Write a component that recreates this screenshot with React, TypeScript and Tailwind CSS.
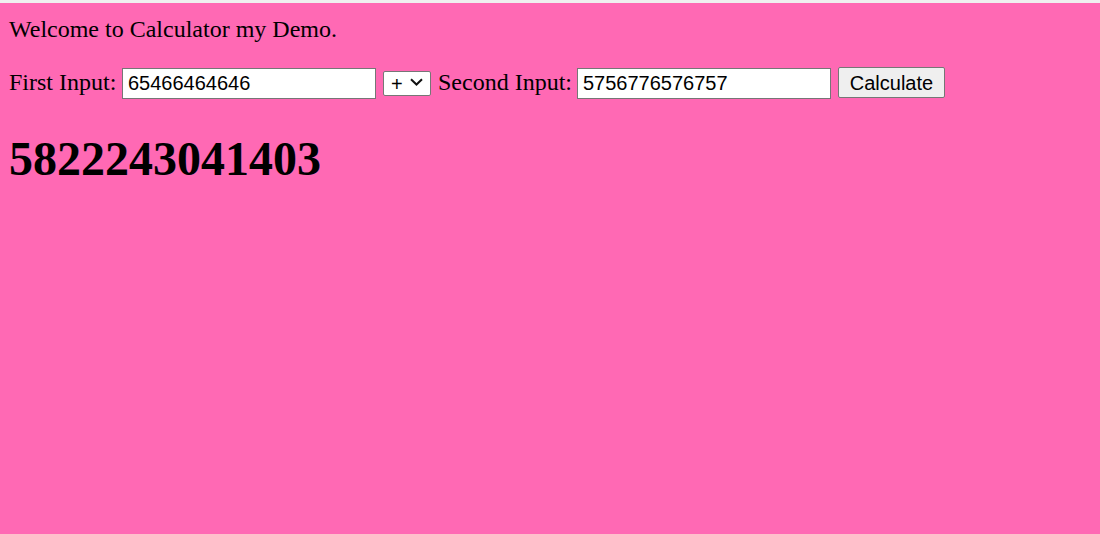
import { useState } from "react";

// simple calculator demo page

const serif = "font-['Liberation_Serif','Times_New_Roman',serif]";
const sans = "font-['Liberation_Sans',Arial,sans-serif]";

export default function App() {
  const [first, setFirst] = useState("65466464646");
  const [second, setSecond] = useState("5756776576757");
  const [op, setOp] = useState("+");
  const [result] = useState("5822243041403");

  return (
    <div className="min-h-screen flex flex-col bg-[#f0f0f0]">
      <div className="h-[3px] shrink-0" />
      <div className={`flex-1 min-h-[531px] bg-[#ff69b4] pl-[9px] text-black ${serif}`}>
        <p className="mt-[13px] text-[24px] leading-[27.6px]">Welcome to Calculator my Demo.</p>

        <div className="mt-[23px] flex items-center h-[31px] text-[24px] leading-[27.6px]">
          <span className="w-[113px] shrink-0 mt-[1px]">First Input:</span>
          <input
            value={first}
            onChange={(e) => setFirst(e.target.value)}
            className={`mt-[2px] h-[31px] w-[254px] border border-[#767676] bg-white px-[5px] text-[20px] text-black outline-none ${sans}`}
          />
          <div className="relative ml-[7px] h-[25px] w-[48px]">
            <select
              value={op}
              onChange={(e) => setOp(e.target.value)}
              className={`h-full w-full appearance-none rounded-[2px] border border-[#767676] bg-white pl-[7px] text-[20px] leading-none text-black ${sans}`}
            >
              <option value="+">+</option>
              <option value="-">-</option>
              <option value="*">*</option>
              <option value="/">/</option>
            </select>
            <svg
              className="pointer-events-none absolute left-[27px] top-[8px]"
              width="13"
              height="8"
              viewBox="0 0 13 8"
              fill="none"
            >
              <path d="M1 1.2 L6.5 6.5 L12 1.2" stroke="#111" strokeWidth="2" />
            </svg>
          </div>
          <span className="ml-[7px] w-[139px] shrink-0 mt-[1px]">Second Input:</span>
          <input
            value={second}
            onChange={(e) => setSecond(e.target.value)}
            className={`mt-[2px] h-[31px] w-[254px] border border-[#767676] bg-white px-[5px] text-[20px] text-black outline-none ${sans}`}
          />
          <button
            className={`ml-[7px] h-[31px] w-[107px] rounded-[2px] border border-[#767676] bg-[#efefef] pt-[2px] text-[20px] text-black ${sans}`}
          >
            Calculate
          </button>
        </div>

        <h1 className="mt-[33px] text-[48px] font-bold leading-[55px]">{result}</h1>
      </div>
    </div>
  );
}
